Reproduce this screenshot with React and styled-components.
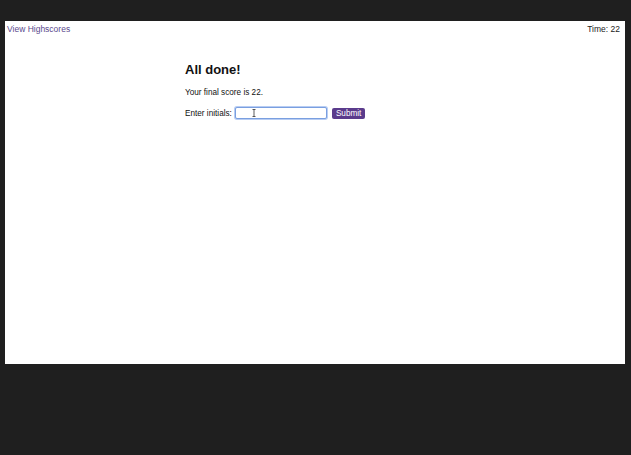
import React from "react";
import styled, { createGlobalStyle } from "styled-components";

const GlobalStyle = createGlobalStyle`
  html, body {
    margin: 0;
    padding: 0;
    background: #1f1f1f;
    font-family: "Liberation Sans", Arial, sans-serif;
  }
`;

const Frame = styled.div`
  width: 631px;
  height: 455px;
  padding: 21px 6px 0 5px;
  box-sizing: border-box;
`;

const Page = styled.div`
  background: #ffffff;
  height: 343px;
  display: flex;
  flex-direction: column;
`;

const Header = styled.header`
  display: flex;
  justify-content: space-between;
  align-items: center;
  padding: 3px 5px 0 2px;
  font-size: 8.5px;
  line-height: 10px;
`;

const HighscoreLink = styled.a`
  color: #5b4a8e;
  text-decoration: none;
`;

const Timer = styled.span`
  color: #222;
`;

const Content = styled.main`
  width: 260px;
  margin: 28px auto 0;
  color: #111;
`;

const Title = styled.h2`
  margin: 0 0 10px;
  font-size: 13px;
  line-height: 16px;
  font-weight: 700;
`;

const Text = styled.p`
  margin: 0 0 9px;
  font-size: 8.2px;
  line-height: 10px;
`;

const Form = styled.form`
  display: flex;
  align-items: center;
  font-size: 8.2px;
`;

const Label = styled.label`
  margin-right: 3px;
`;

const InputWrap = styled.div`
  position: relative;
`;

const Input = styled.input`
  width: 92px;
  height: 12px;
  box-sizing: border-box;
  border: 1px solid #7a9fe0;
  border-radius: 2px;
  box-shadow: 0 0 0 1px #b8cdf3;
  outline: none;
  padding: 0 2px;
  font-size: 8px;
`;

const Cursor = styled.svg`
  position: absolute;
  left: 17px;
  top: 2px;
`;

const SubmitButton = styled.button`
  margin-left: 5px;
  height: 11px;
  padding: 0 4px;
  border: none;
  border-radius: 2px;
  background: #5b3b8c;
  color: #fff;
  font-family: "Liberation Sans", Arial, sans-serif;
  font-size: 8.2px;
  line-height: 11px;
`;

export default function App() {
  return (
    <Frame>
      <GlobalStyle />
      <Page>
        <Header>
          <HighscoreLink href="#">View Highscores</HighscoreLink>
          <Timer>Time: 22</Timer>
        </Header>
        <Content>
          <Title>All done!</Title>
          <Text>Your final score is 22.</Text>
          <Form onSubmit={(e) => e.preventDefault()}>
            <Label htmlFor="initials">Enter initials:</Label>
            <InputWrap>
              <Input id="initials" type="text" />
              <Cursor width="4" height="8" viewBox="0 0 4 8">
                <path d="M0.5 0.5 H3.5 M2 0.5 V7.5 M0.5 7.5 H3.5" stroke="#333" strokeWidth="0.8" fill="none" />
              </Cursor>
            </InputWrap>
            <SubmitButton type="submit">Submit</SubmitButton>
          </Form>
        </Content>
      </Page>
    </Frame>
  );
}
